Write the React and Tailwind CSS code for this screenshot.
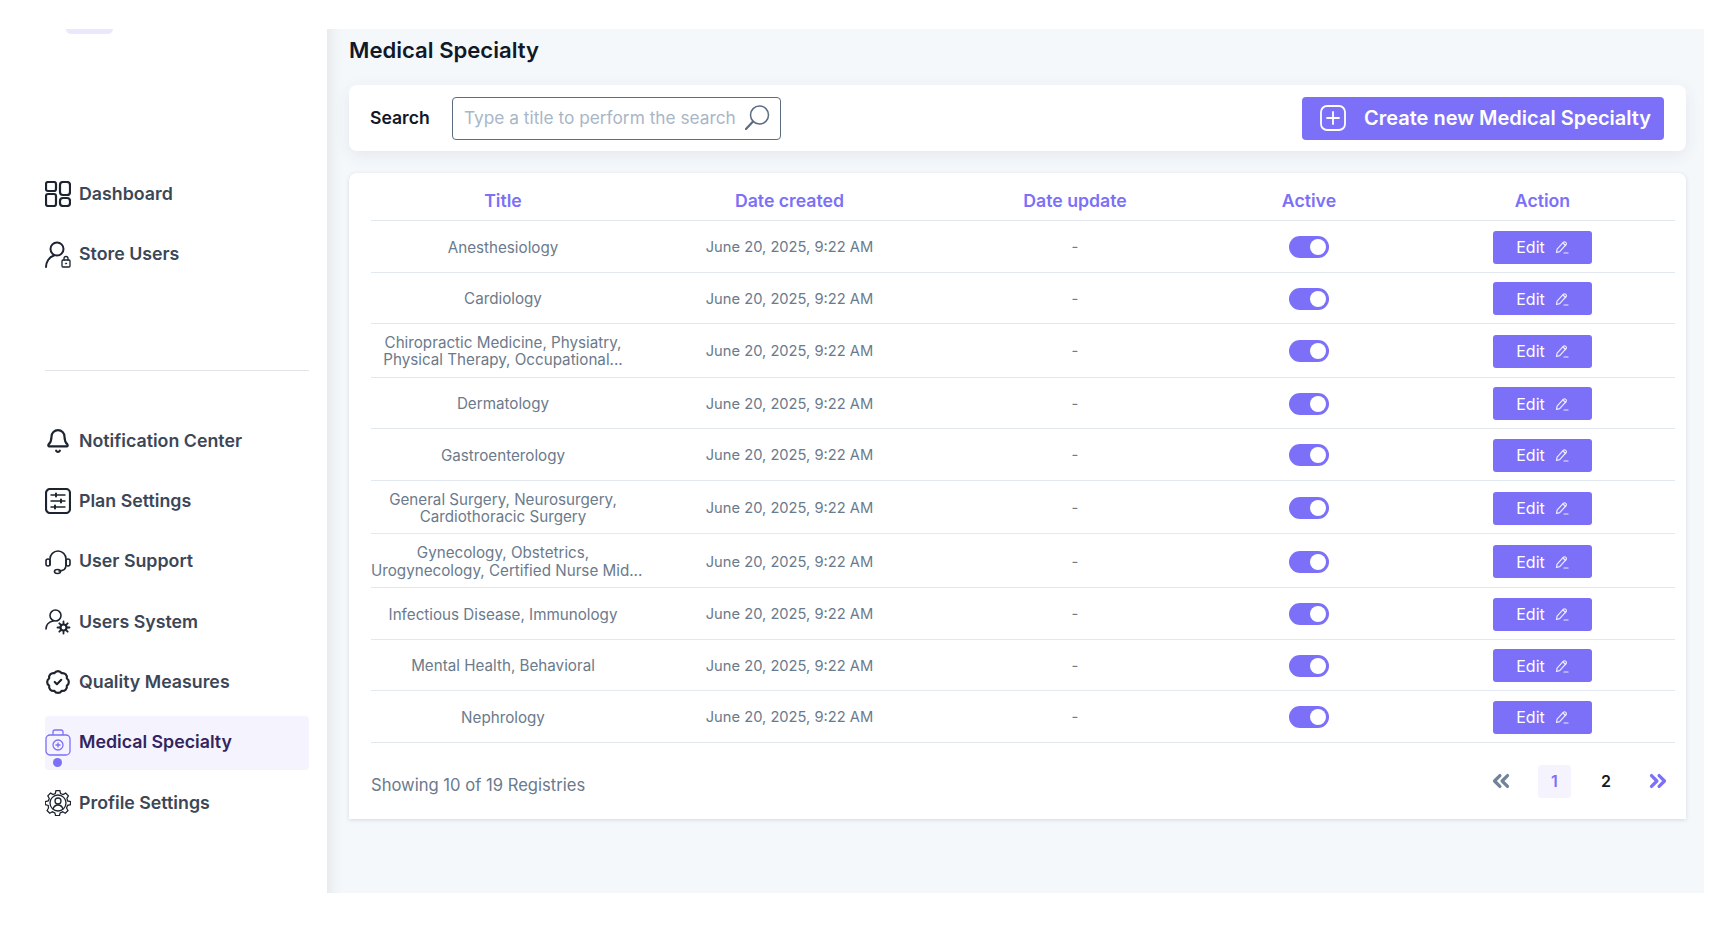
import { Bell, BadgeCheck, ChevronsLeft, ChevronsRight } from 'lucide-react';

const font = { fontFamily: 'Inter, sans-serif' };

const DashIcon = () => (
  <svg width="26" height="26" viewBox="0 0 26 26" fill="none" stroke="#1c2430" strokeWidth="2.2">
    <rect x="1" y="1" width="10" height="9" rx="2" />
    <rect x="15" y="1" width="10" height="13" rx="3" />
    <rect x="1" y="13" width="10" height="12" rx="2" />
    <rect x="15" y="17" width="10" height="8" rx="3" />
  </svg>
);

const StoreUsersIcon = () => (
  <svg width="26" height="27" viewBox="0 0 26 27" fill="none" stroke="#1c2430" strokeWidth="2" strokeLinecap="round">
    <circle cx="12" cy="8" r="6.5" />
    <path d="M1 26c0-5 3-10 8-11.5" />
    <rect x="17" y="19" width="8" height="7" rx="1" strokeWidth="1.3" />
    <path d="M19 19v-1.5a2 2 0 0 1 4 0V19" strokeWidth="1.3" />
    <circle cx="21" cy="22.5" r=".6" strokeWidth="1" />
  </svg>
);

const PlanIcon = () => (
  <svg width="26" height="26" viewBox="0 0 26 26" fill="none" stroke="#1c2430" strokeWidth="2.2" strokeLinecap="round">
    <rect x="1" y="1" width="24" height="24" rx="4" />
    <path d="M6 7h14M6 13h14M6 19h14" strokeWidth="1.4" />
    <path d="M11 5.500v3M16 11.500v3M10 17.500v3" strokeWidth="2" />
  </svg>
);

const HeadsetIcon = () => (
  <svg width="26" height="26" viewBox="0 0 26 26" fill="none" stroke="#1c2430" strokeWidth="1.6" strokeLinecap="round">
    <path d="M5 16V10a8 8 0 0 1 16 0v6c0 4-3 6-7 6" />
    <rect x="1" y="10" width="4" height="7" rx="2" />
    <rect x="21" y="10" width="4" height="7" rx="2" />
    <ellipse cx="12.500" cy="22.500" rx="3" ry="2" />
  </svg>
);

const UserGearIcon = () => (
  <svg width="26" height="26" viewBox="0 0 26 26" fill="none" stroke="#1c2430" strokeWidth="1.6" strokeLinecap="round">
    <circle cx="10.500" cy="6.500" r="5.500" />
    <path d="M1 20c0-4 3-7 7-8" />
    <circle cx="18.500" cy="18.500" r="3" strokeWidth="2.200" />
    <path d="M18.500 12.500v2M18.500 22.500v2M12.500 18.500h2M22.500 18.500h2M14.300 14.300l1.400 1.400M21.300 21.300l1.400 1.400M14.300 22.700l1.400-1.400M21.300 15.700l1.400-1.400" strokeWidth="1.800" />
  </svg>
);

const MedicalIcon = () => (
  <svg width="26" height="27" viewBox="0 0 26 27" fill="none" stroke="#7b70f7" strokeWidth="1.300">
    <rect x="1" y="6" width="24" height="20" rx="4" />
    <path d="M8 6V3a2 2 0 0 1 2-2h6a2 2 0 0 1 2 2v3" />
    <circle cx="13" cy="16" r="5" />
    <path d="M13 13.500v5M10.500 16h5" />
  </svg>
);

const ProfileGearIcon = () => (
  <svg width="26" height="26" viewBox="0 0 26 26" fill="none" stroke="#1c2430" strokeWidth="1.300" strokeLinecap="round">
    <path d="M11 1h4l.7 3 2.600 1.100 2.700-1.500 2.800 2.800-1.500 2.700L23 11.700l3 .7v3.200l-3 .7-1.100 2.600 1.500 2.700-2.800 2.800-2.700-1.500-2.600 1.100-.7 2.900h-4l-.7-2.900-2.600-1.100-2.700 1.500-2.800-2.800 1.500-2.700L3 16.300l-3-.7v-3.200l3-.7 1.100-2.600-1.500-2.700 2.800-2.800 2.700 1.500L10.300 4z" transform="translate(.3 -.4) scale(.97)" />
    <circle cx="13" cy="13" r="8" />
    <circle cx="13" cy="11" r="3" />
    <path d="M8 19c1-3 3-4 5-4s4 1 5 4" />
  </svg>
);

const PencilIcon = () => (
  <svg width="14" height="14" viewBox="0 0 14 14" fill="none" stroke="#efedff" strokeWidth="1.200" strokeLinejoin="round" strokeLinecap="round">
    <path d="M1.500 12.500l.6-3.300 6.400-7a1.400 1.400 0 0 1 2 0l.5.500a1.400 1.400 0 0 1 0 2l-6.300 7z" />
    <path d="M8 3l2.600 2.500M9 13h4" />
  </svg>
);

const SearchIcon = () => (
  <svg width="28" height="26" viewBox="0 0 28 26" fill="none" stroke="#5b6b80" strokeWidth="1.500" strokeLinecap="round">
    <circle cx="16.500" cy="10" r="9" />
    <path d="M10 16.500L3 24" strokeWidth="2.200" />
  </svg>
);

const PlusBox = () => (
  <svg width="26" height="26" viewBox="0 0 26 26" fill="none" stroke="white" strokeWidth="1.800" strokeLinecap="round">
    <rect x="1" y="1" width="24" height="24" rx="6" />
    <path d="M13 7v12M7 13h12" />
  </svg>
);

const firstMenu = [
  { label: 'Dashboard', icon: <DashIcon /> },
  { label: 'Store Users', icon: <StoreUsersIcon /> },
];

const secondMenu = [
  { label: 'Notification Center', icon: <Bell size={28} strokeWidth={2} color="#1c2430" /> },
  { label: 'Plan Settings', icon: <PlanIcon /> },
  { label: 'User Support', icon: <HeadsetIcon /> },
  { label: 'Users System', icon: <UserGearIcon /> },
  { label: 'Quality Measures', icon: <BadgeCheck size={30} strokeWidth={2} color="#1c2430" /> },
  { label: 'Medical Specialty', icon: <MedicalIcon />, active: true },
  { label: 'Profile Settings', icon: <ProfileGearIcon /> },
];

const rows = [
  { title: ['Anesthesiology'] },
  { title: ['Cardiology'] },
  { title: ['Chiropractic Medicine, Physiatry,', 'Physical Therapy, Occupational...'], tall: true },
  { title: ['Dermatology'] },
  { title: ['Gastroenterology'] },
  { title: ['General Surgery, Neurosurgery,', 'Cardiothoracic Surgery'], tall: true },
  { title: ['Gynecology, Obstetrics,', 'Urogynecology, Certified Nurse Mid...'], tall: true },
  { title: ['Infectious Disease, Immunology'] },
  { title: ['Mental Health, Behavioral'] },
  { title: ['Nephrology'] },
];

const MenuItem = ({ item }) => (
  <div className={`relative flex items-center h-[54px] gap-[8px] rounded ${item.active ? 'bg-[#f5f4fe]' : ''}`}>
    <div className="w-[26px] flex justify-center">{item.icon}</div>
    <span className={`text-[17.800px] font-semibold ${item.active ? 'text-[#33245f]' : 'text-[#3b4757]'}`}>
      {item.label}
    </span>
    {item.active && <span className="absolute left-[8px] bottom-[3px] w-[9px] h-[9px] rounded-full bg-[#7b70f7]" />}
  </div>
);

const Sidebar = () => (
  <aside className="w-[327px] shrink-0 bg-white">
    <div className="ml-[66px] w-[47px] h-[5px] rounded-b-full bg-[#e9e8fd]" />
    <div className="ml-[45px] w-[264px] mt-[133px] flex flex-col gap-[6.200px]">
      {firstMenu.map((item) => <MenuItem key={item.label} item={item} />)}
    </div>
    <div className="ml-[45px] w-[264px] mt-[89px] border-t border-[#e2e6ea]" />
    <div className="ml-[45px] w-[264px] mt-[43px] flex flex-col gap-[6.300px]">
      {secondMenu.map((item) => <MenuItem key={item.label} item={item} />)}
    </div>
  </aside>
);

const Toggle = () => (
  <div className="w-[40px] h-[22px] rounded-full bg-[#7b70f7] flex items-center justify-end pr-[3px]">
    <div className="w-[16px] h-[16px] rounded-full bg-white" />
  </div>
);

const gridCols = 'grid grid-cols-[264px_309px_262px_206px_261px]';

const Row = ({ row }) => (
  <div className={`${gridCols} items-center text-center text-[14.700px] pt-[2px] text-[#6b7a8c] border-b border-[#e2e8f0] ${row.tall ? 'h-[53.700px]' : 'h-[51.500px]'}`}>
    <div className="text-[15.200px] leading-[17.500px] whitespace-nowrap">
      {row.title.map((line) => <div key={line}>{line}</div>)}
    </div>
    <div>June 20, 2025, 9:22 AM</div>
    <div>-</div>
    <div className="flex justify-center"><Toggle /></div>
    <div className="flex justify-center">
      <button className="w-[99px] h-[33px] rounded-[3px] bg-[#7b70f7] text-white text-[16px] flex items-center justify-center gap-[10px]">
        Edit <PencilIcon />
      </button>
    </div>
  </div>
);

export default function App() {
  return (
    <div className="min-h-[946px] bg-white pt-[29px] flex" style={font}>
      <Sidebar />
      <main className="w-[1377px] h-[864px] bg-[#f5f8fb] shadow-[inset_16px_0_14px_-12px_rgba(0,0,0,0.07)] pl-[22px] pr-[18px]">
        <h1 className="text-[22.100px] font-semibold text-[#111827] leading-[42px]">Medical Specialty</h1>
        <div className="mt-[14px] h-[66px] bg-white rounded-lg shadow-[0_4px_16px_rgba(30,41,59,0.08)] flex items-center justify-between pl-[21px] pr-[22px]">
          <div className="flex items-center">
            <span className="w-[82px] text-[17.600px] font-semibold text-[#111827]">Search</span>
            <div className="w-[329px] h-[43px] rounded border border-[#5b6b80] flex items-center justify-between pl-[11px] pr-[9px]">
              <span className="text-[17.300px] text-[#a9b6c6] whitespace-nowrap">Type a title to perform the search</span>
              <SearchIcon />
            </div>
          </div>
          <button className="w-[362px] h-[43px] rounded bg-[#7b70f7] text-white flex items-center pl-[18px] gap-[18px]">
            <PlusBox />
            <span className="text-[20px] font-semibold whitespace-nowrap">Create new Medical Specialty</span>
          </button>
        </div>
        <div className="mt-[22px] h-[646px] bg-white rounded-lg rounded-b-none shadow-[0_1px_4px_rgba(30,41,59,0.15)] pl-[22px] pr-[11px]">
          <div className={`${gridCols} items-center text-center h-[48px] pt-[9px] text-[17.700px] font-semibold text-[#7b70f7] border-b border-[#e2e8f0]`}>
            <div>Title</div>
            <div>Date created</div>
            <div>Date update</div>
            <div>Active</div>
            <div>Action</div>
          </div>
          {rows.map((row) => <Row key={row.title[0]} row={row} />)}
          <div className="flex justify-between pt-[22px] pr-[4px]">
            <span className="mt-[8px] text-[16.600px] text-[#6b7a8c]">Showing 10 of 19 Registries</span>
            <div className="flex items-center h-[33px] text-[16px] font-semibold">
              <ChevronsLeft size={26} strokeWidth={3} color="#71839b" />
              <span className="ml-[24px] w-[33px] h-[33px] rounded bg-[#f5f4fe] text-[#7b70f7] flex items-center justify-center">1</span>
              <span className="ml-[15px] w-[40px] text-center text-[#111827]">2</span>
              <ChevronsRight size={26} strokeWidth={3} color="#7b70f7" className="ml-[19px]" />
            </div>
          </div>
        </div>
      </main>
    </div>
  );
}
